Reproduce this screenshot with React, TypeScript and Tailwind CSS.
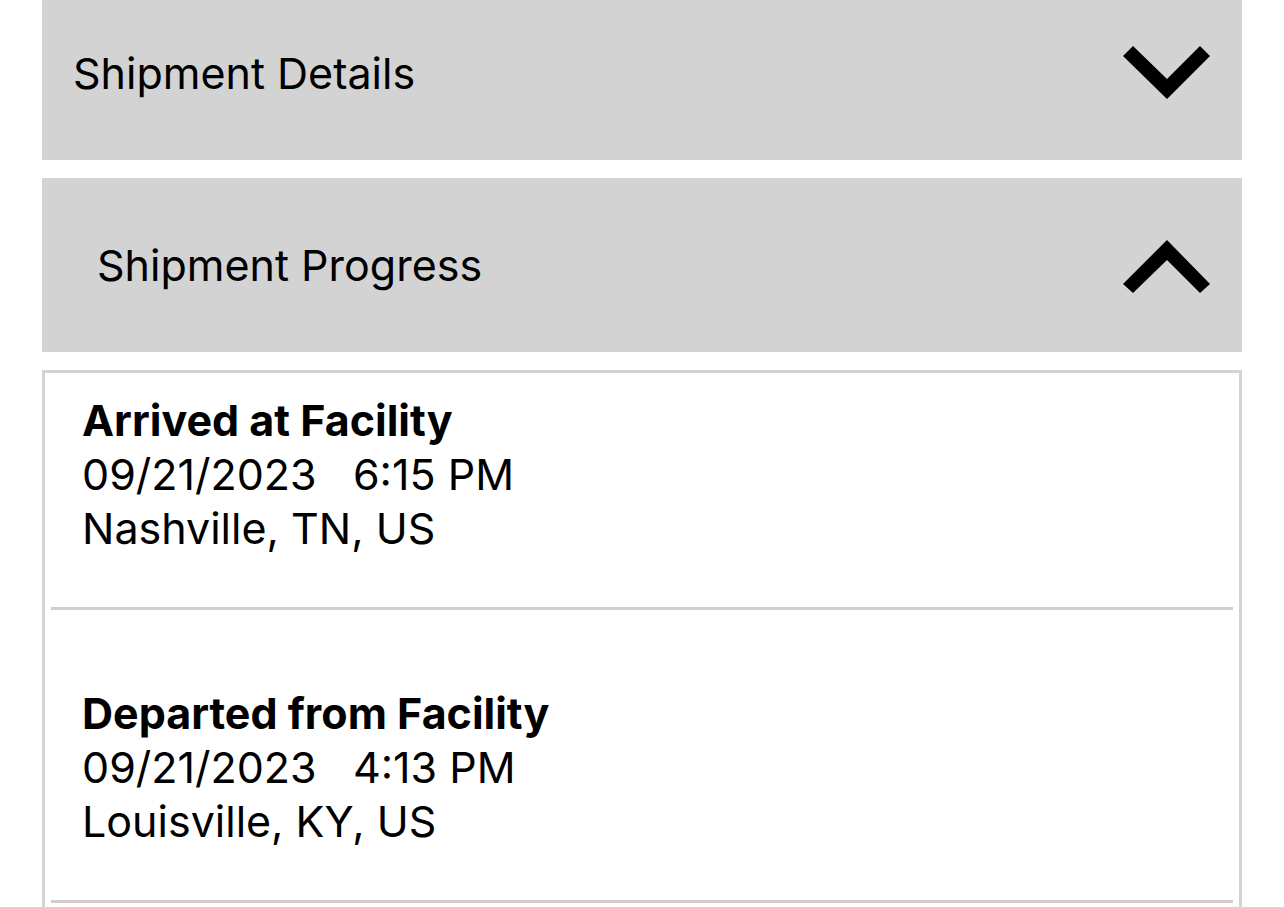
import React from 'react';

const font = { fontFamily: 'Inter, "Liberation Sans", sans-serif' };

const ChevronDown = () => (
  <svg width="94" height="66" viewBox="0 0 94 66" className="shrink-0">
    <polygon points="3,16 13,6 47,39 80,6 90,16 47,59" fill="#000" />
  </svg>
);

const ChevronUp = () => (
  <svg width="94" height="66" viewBox="0 0 94 66" className="shrink-0">
    <polygon points="3,52 47,8 90,52 80,61 47,28 13,61" fill="#000" />
  </svg>
);

interface Stop {
  status: string;
  date: string;
  time: string;
  place: string;
}

const stops: Stop[] = [
  { status: 'Arrived at Facility', date: '09/21/2023', time: '6:15 PM', place: 'Nashville, TN, US' },
  { status: 'Departed from Facility', date: '09/21/2023', time: '4:13 PM', place: 'Louisville, KY, US' },
];

export default function App() {
  return (
    <div className="min-h-screen bg-white overflow-hidden text-black" style={font}>
      <div className="ml-[42px] w-[1200px] -mt-[14px] flex flex-col gap-[18px]">
        {/* Shipment Details (collapsed) */}
        <div className="h-[174px] bg-[#d3d3d3] flex items-center justify-between pl-[31px] pr-[28px]">
          <span className="text-[43px] leading-none">Shipment Details</span>
          <ChevronDown />
        </div>

        {/* Shipment Progress (expanded) */}
        <div className="h-[174px] bg-[#d3d3d3] flex items-center justify-between pl-[55px] pr-[28px]">
          <span className="text-[43px] leading-none">Shipment Progress</span>
          <ChevronUp />
        </div>

        <div className="border-[3px] border-[#d3d3d3] px-[6px] pb-[200px]">
          {stops.map((s, i) => (
            <div
              key={i}
              className={`border-b-[3px] border-[#d2cdc7] pl-[31px] pb-[52px] ${i === 0 ? 'pt-[20px]' : 'pt-[76px]'}`}
            >
              <div className="text-[43px] leading-[54px] font-bold">{s.status}</div>
              <div className="text-[43px] leading-[54px] whitespace-pre">
                {s.date}{'   '}{s.time}
              </div>
              <div className="text-[43px] leading-[54px]">{s.place}</div>
            </div>
          ))}
        </div>
      </div>
    </div>
  );
}
